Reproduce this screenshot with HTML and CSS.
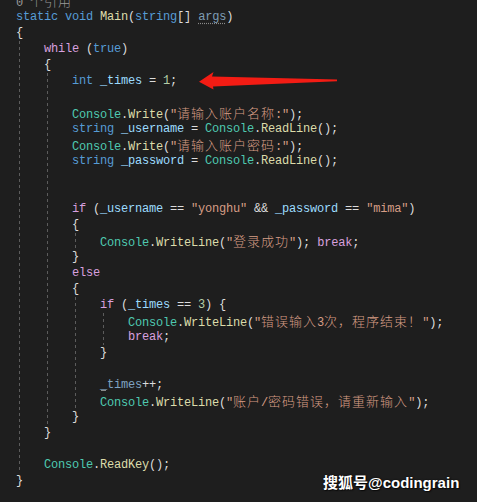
FILE: index.html
```html
<!DOCTYPE html>
<html lang="zh-CN">
<head>
<meta charset="utf-8">
<title>Main</title>
<link rel="stylesheet" href="styles.css">
</head>
<body>
<div class="editor">
  <div class="code">
    <div class="ln ref">0 <span class="cj">个引用</span></div>
    <div class="ln"><span class="k">static</span> <span class="k">void</span> <span class="m">Main</span>(<span class="k">string</span>[] <span class="arg">args</span>)</div>
    <div class="ln">{</div>
    <div class="blk">
      <div class="ln"><span class="c">while</span> (<span class="k">true</span>)</div>
      <div class="ln">{</div>
      <div class="blk">
        <div class="ln"><span class="k">int</span> <span class="v">_times</span> = <span class="n">1</span>;</div>
        <div class="ln"></div>
        <div class="ln"><span class="t">Console</span>.<span class="m">Write</span>(<span class="s">"<span class="cj">请输入账户名称</span>:"</span>);</div>
        <div class="ln"><span class="k">string</span> <span class="v">_username</span> = <span class="t">Console</span>.<span class="m">ReadLine</span>();</div>
        <div class="ln"><span class="t">Console</span>.<span class="m">Write</span>(<span class="s">"<span class="cj">请输入账户密码</span>:"</span>);</div>
        <div class="ln"><span class="k">string</span> <span class="v">_password</span> = <span class="t">Console</span>.<span class="m">ReadLine</span>();</div>
        <div class="ln"></div>
        <div class="ln"></div>
        <div class="ln"><span class="c">if</span> (<span class="v">_username</span> == <span class="s">"yonghu"</span> &amp;&amp; <span class="v">_password</span> == <span class="s">"mima"</span>)</div>
        <div class="ln">{</div>
        <div class="blk">
          <div class="ln"><span class="t">Console</span>.<span class="m">WriteLine</span>(<span class="s">"<span class="cj">登录成功</span>"</span>); <span class="c">break</span>;</div>
        </div>
        <div class="ln">}</div>
        <div class="ln"><span class="c">else</span></div>
        <div class="ln">{</div>
        <div class="blk">
          <div class="ln"><span class="c">if</span> (<span class="v">_times</span> == <span class="n">3</span>) {</div>
          <div class="blk">
            <div class="ln"><span class="t">Console</span>.<span class="m">WriteLine</span>(<span class="s">"<span class="cj">错误输入</span>3<span class="cj">次，程序结束！</span>"</span>);</div>
            <div class="ln"><span class="c">break</span>;</div>
          </div>
          <div class="ln">}</div>
          <div class="ln"></div>
          <div class="ln"><span class="fade">_times</span>++;</div>
          <div class="ln"><span class="t">Console</span>.<span class="m">WriteLine</span>(<span class="s">"<span class="cj">账户</span>/<span class="cj">密码错误，请重新输入</span>"</span>);</div>
        </div>
        <div class="ln">}</div>
      </div>
      <div class="ln">}</div>
      <div class="ln"></div>
      <div class="ln"><span class="t">Console</span>.<span class="m">ReadKey</span>();</div>
    </div>
    <div class="ln">}</div>
  </div>

  <svg class="arrow" width="477" height="502" viewBox="0 0 477 502" aria-hidden="true">
    <polygon points="199,81.7 213.5,72 212,76.5 337,79.6 337,81.2 213,86.5 213.5,89.5" fill="#f31c14"/>
  </svg>

  <div class="mark">搜狐号@codingrain</div>
</div>
</body>
</html>
```
FILE: styles.css
```css
html, body {
  margin: 0;
  padding: 0;
  background: #1e1e1e;
  overflow: hidden;
}

.editor {
  position: relative;
  width: 477px;
  height: 502px;
  background: #1e1e1e;
  overflow: hidden;
}

.code {
  margin-top: -7px;
  padding-left: 16px;
  font-family: "Liberation Mono", "DejaVu Sans Mono", monospace;
  font-size: 12px;
  letter-spacing: -0.2px;
  color: #dcdcdc;
}

.ln {
  height: 16px;
  line-height: 16px;
  white-space: pre;
}

.blk {
  padding-left: 28px;
  background-image: repeating-linear-gradient(to bottom, #5c5c5c 0 3px, transparent 3px 6px);
  background-size: 1px 100%;
  background-position: 3px 0;
  background-repeat: no-repeat;
}

.cj {
  font-family: "Noto Sans CJK SC", sans-serif;
  font-size: 13px;
  font-weight: 300;
  letter-spacing: 1px;
}

.ref { color: #999999; }
.k { color: #569cd6; }
.c { color: #d8a0df; }
.m { color: #dcdcaa; }
.t { color: #4ec9b0; }
.v { color: #9cdcfe; }
.n { color: #b5cea8; }
.s { color: #d69d85; }

.arg {
  color: #7f9db5;
  text-decoration: underline dotted #8a8a8a;
  text-underline-offset: 3px;
}

.fade {
  color: #7fa3c2;
  position: relative;
}
.fade::before {
  content: "";
  position: absolute;
  left: 1px;
  bottom: 1px;
  width: 5px;
  height: 1px;
  background: #8a8a8a;
}

.arrow {
  position: absolute;
  left: 0;
  top: 0;
  pointer-events: none;
}

.mark {
  position: absolute;
  left: 323px;
  top: 474px;
  font-family: "Liberation Sans", "Noto Sans CJK SC", sans-serif;
  font-weight: 700;
  font-size: 15px;
  line-height: 18px;
  color: #ffffff;
  text-shadow: 0 0 2px rgba(0,0,0,0.8), 1px 1px 1px rgba(0,0,0,0.6);
  white-space: nowrap;
}
```
